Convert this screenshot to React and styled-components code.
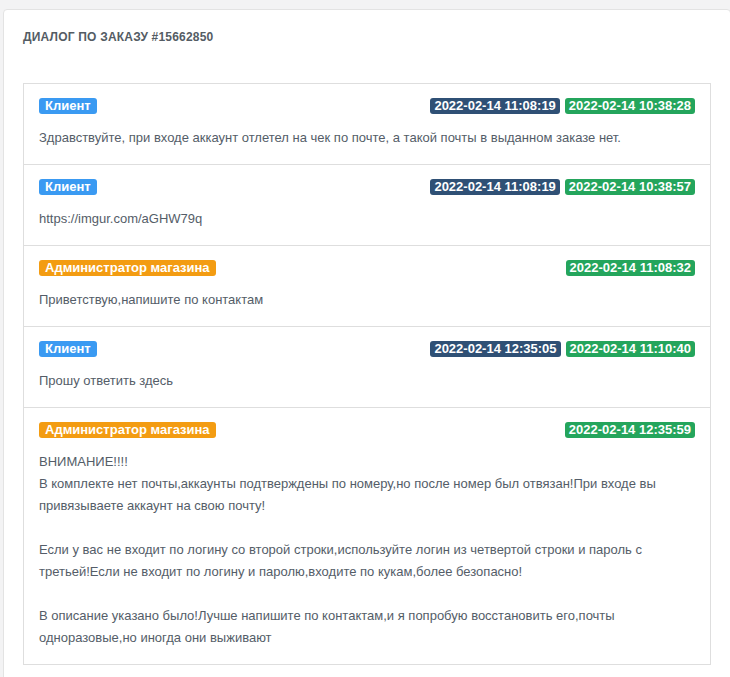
import styled, { createGlobalStyle } from 'styled-components';

const GlobalStyle = createGlobalStyle`
  html, body {
    margin: 0;
    padding: 0;
    background: #f3f3f4;
    overflow: hidden;
  }
  body {
    font-family: "Liberation Sans", Arial, sans-serif;
  }
`;

const Page = styled.div`
  padding: 9px 0 0 3px;
  height: 677px;
  box-sizing: border-box;
`;

const Card = styled.section`
  width: 728px;
  min-height: 700px;
  box-sizing: border-box;
  background: #fff;
  border: 1px solid #e3e3e3;
  border-radius: 4px;
  padding: 19px 19px 20px;
`;

const Title = styled.h4`
  margin: 0 0 37px;
  font-size: 12px;
  line-height: 17px;
  font-weight: bold;
  letter-spacing: 0.2px;
  color: #545c64;
  text-transform: uppercase;
`;

const List = styled.div`
  border: 1px solid #dedede;
`;

const Row = styled.div`
  padding: 11px 15px 15px;
  & + & {
    border-top: 1px solid #dedede;
  }
`;

const Head = styled.div`
  display: flex;
  align-items: center;
  height: 22px;
`;

const Dates = styled.div`
  margin-left: auto;
  display: flex;
  gap: 5px;
`;

const colors = {
  client: '#3a9af2',
  admin: '#f39c12',
  read: '#2f5075',
  sent: '#24a55c',
};

const Badge = styled.span`
  display: inline-block;
  height: 16px;
  line-height: 16px;
  padding: 0 ${(p) => (p.$wide ? 6 : 4)}px;
  border-radius: 3px;
  font-size: 13px;
  font-weight: bold;
  color: #fff;
  background: ${(p) => colors[p.$kind]};
`;

const Text = styled.div`
  margin-top: 10px;
  font-size: 13px;
  line-height: 22px;
  color: #545d68;
  white-space: pre-line;
`;

const messages = [
  {
    role: 'client',
    read: '2022-02-14 11:08:19',
    sent: '2022-02-14 10:38:28',
    text: 'Здравствуйте, при входе аккаунт отлетел на чек по почте, а такой почты в выданном заказе нет.',
  },
  {
    role: 'client',
    read: '2022-02-14 11:08:19',
    sent: '2022-02-14 10:38:57',
    text: 'https://imgur.com/aGHW79q',
  },
  {
    role: 'admin',
    sent: '2022-02-14 11:08:32',
    text: 'Приветствую,напишите по контактам',
  },
  {
    role: 'client',
    read: '2022-02-14 12:35:05',
    sent: '2022-02-14 11:10:40',
    text: 'Прошу ответить здесь',
  },
  {
    role: 'admin',
    sent: '2022-02-14 12:35:59',
    text:
      'ВНИМАНИЕ!!!!\nВ комплекте нет почты,аккаунты подтверждены по номеру,но после номер был отвязан!При входе вы привязываете аккаунт на свою почту!\n\nЕсли у вас не входит по логину со второй строки,используйте логин из четвертой строки и пароль с третьей!Если не входит по логину и паролю,входите по кукам,более безопасно!\n\nВ описание указано было!Лучше напишите по контактам,и я попробую восстановить его,почты одноразовые,но иногда они выживают',
  },
];

const roleLabel = {
  client: 'Клиент',
  admin: 'Администратор магазина',
};

function App() {
  return (
    <Page>
      <GlobalStyle />
      <Card>
        <Title>Диалог по заказу #15662850</Title>
        <List>
          {messages.map((m, i) => (
            <Row key={i}>
              <Head>
                <Badge $kind={m.role} $wide>{roleLabel[m.role]}</Badge>
                <Dates>
                  {m.read && <Badge $kind="read">{m.read}</Badge>}
                  <Badge $kind="sent">{m.sent}</Badge>
                </Dates>
              </Head>
              <Text>{m.text}</Text>
            </Row>
          ))}
        </List>
      </Card>
    </Page>
  );
}

export default App;
